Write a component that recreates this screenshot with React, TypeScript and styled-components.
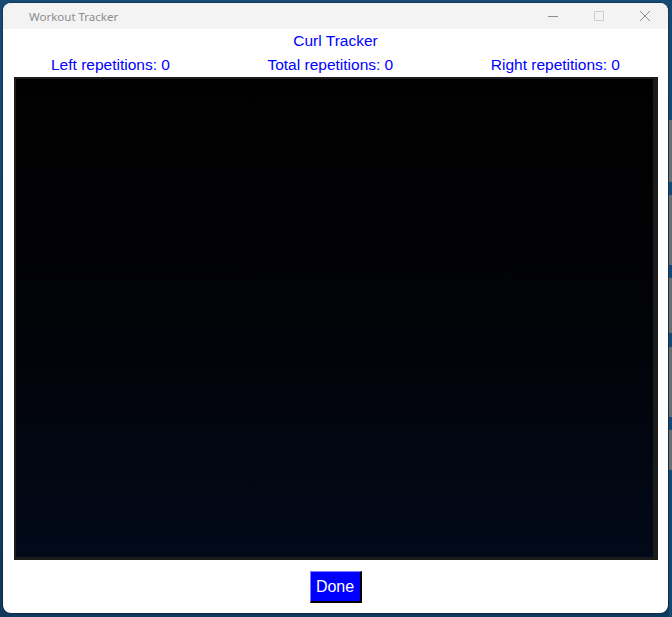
import React from "react";
import styled, { createGlobalStyle } from "styled-components";

const Global = createGlobalStyle`
  html, body {
    margin: 0;
    padding: 0;
    width: 672px;
    height: 617px;
    overflow: hidden;
    background:
      linear-gradient(
        #174773 0 120px,
        #6e6e6e 120px 182px,
        #174773 182px 195px,
        #6e6e6e 195px 265px,
        #174773 265px 278px,
        #6e6e6e 278px 333px,
        #174773 333px 347px,
        #6e6e6e 347px 417px,
        #174773 417px 430px,
        #6e6e6e 430px 470px,
        #174773 470px
      ) right top / 3px 617px no-repeat,
      linear-gradient(#184a76, #0f3a5e);
  }
  #root { width: 672px; height: 617px; }
`;

const Screen = styled.div`
  width: 672px;
  height: 617px;
  box-sizing: border-box;
  padding: 3px 4px 4px 3px;
`;

const Window = styled.div`
  width: 665px;
  height: 610px;
  border-radius: 8px;
  overflow: hidden;
  background: #ffffff;
  display: flex;
  flex-direction: column;
  box-shadow: 0 0 0 1px rgba(0, 0, 0, 0.25);
`;

const TitleBar = styled.div`
  height: 26px;
  flex: 0 0 26px;
  background: #f3f3f3;
  display: flex;
  align-items: center;
  padding-left: 26px;
`;

const TitleText = styled.span`
  font-family: "Noto Sans", "Open Sans", sans-serif;
  font-size: 11.5px;
  color: #8c8c8c;
  flex: 1;
  margin-top: 1px;
`;

const Controls = styled.div`
  display: flex;
  height: 26px;
`;

const ControlBtn = styled.div`
  width: 46px;
  height: 26px;
  display: flex;
  align-items: center;
  justify-content: center;
`;

const Heading = styled.div`
  height: 24px;
  font-family: "Liberation Sans", Arial, sans-serif;
  font-size: 15.5px;
  color: #0000ff;
  text-align: center;
  line-height: 24px;
`;

const CountRow = styled.div`
  height: 24px;
  display: flex;
  justify-content: space-between;
  padding: 0 48px;
  font-family: "Liberation Sans", Arial, sans-serif;
  font-size: 15.5px;
  color: #0000ff;
  line-height: 24px;
`;

const VideoFrame = styled.div`
  margin: 0 10px 0 11px;
  height: 483px;
  box-sizing: border-box;
  border-style: solid;
  border-color: #1c1c1c;
  border-width: 2px 5px 3px 2px;
  background: linear-gradient(#010101 0%, #020307 50%, #020919 100%);
`;

const Footer = styled.div`
  flex: 1;
  display: flex;
  justify-content: center;
  padding-top: 11px;
`;

const DoneButton = styled.button`
  width: 52px;
  height: 32px;
  box-sizing: border-box;
  background: #0000ff;
  color: #ffffff;
  font-family: "Liberation Sans", Arial, sans-serif;
  font-size: 16px;
  padding: 0;
  border-style: solid;
  border-width: 1px 2px 2px 1px;
  border-color: #8080ff #000000 #000000 #8080ff;
  cursor: pointer;
`;

export default function App() {
  return (
    <>
      <Global />
      <Screen>
        <Window>
          <TitleBar>
            <TitleText>Workout Tracker</TitleText>
            <Controls>
              <ControlBtn>
                <svg width="10" height="10" viewBox="0 0 10 10">
                  <line x1="0" y1="5.5" x2="10" y2="5.5" stroke="#8f8f8f" strokeWidth="1" />
                </svg>
              </ControlBtn>
              <ControlBtn>
                <svg width="10" height="10" viewBox="0 0 10 10">
                  <rect x="0.5" y="0.5" width="9" height="9" fill="none" stroke="#cfcfcf" strokeWidth="1" />
                </svg>
              </ControlBtn>
              <ControlBtn>
                <svg width="10" height="10" viewBox="0 0 10 10">
                  <path d="M0 0 L10 10 M10 0 L0 10" stroke="#8a8a8a" strokeWidth="1" />
                </svg>
              </ControlBtn>
            </Controls>
          </TitleBar>
          <Heading>Curl Tracker</Heading>
          <CountRow>
            <span>Left repetitions: 0</span>
            <span>Total repetitions: 0</span>
            <span>Right repetitions: 0</span>
          </CountRow>
          <VideoFrame />
          <Footer>
            <DoneButton>Done</DoneButton>
          </Footer>
        </Window>
      </Screen>
    </>
  );
}
